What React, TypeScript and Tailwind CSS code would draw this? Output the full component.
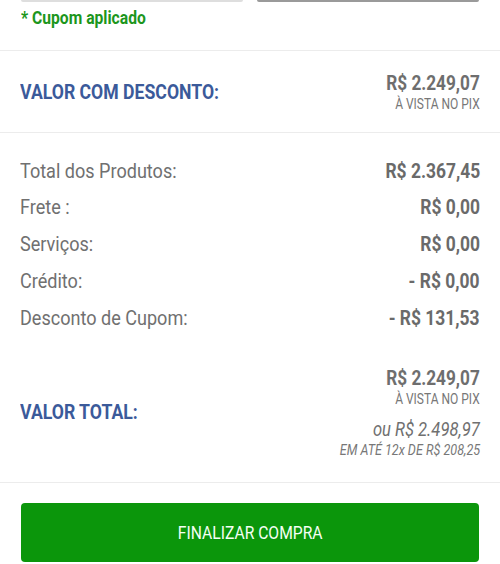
import React from "react";

const rows: [string, string][] = [
  ["Total dos Produtos:", "R$ 2.367,45"],
  ["Frete :", "R$ 0,00"],
  ["Serviços:", "R$ 0,00"],
  ["Crédito:", "- R$ 0,00"],
  ["Desconto de Cupom:", "- R$ 131,53"],
];

function Price() {
  return (
    <>
      <span className="inline-block origin-right scale-x-[0.86] whitespace-nowrap text-[20px] font-bold text-[#6e6e6e] leading-[24px]">
        R$ 2.249,07
      </span>
      <span className="inline-block origin-right scale-x-[0.8] whitespace-nowrap text-[15px] text-[#777] leading-[18px]">
        À VISTA NO PIX
      </span>
    </>
  );
}

export default function App() {
  return (
    <div
      className="w-[500px] h-[564px] bg-white overflow-hidden"
      style={{ fontFamily: "Roboto, 'Noto Sans', sans-serif" }}
    >
      <div className="flex px-[21px] gap-[14px]">
        <div className="flex-1 h-[2px] bg-[#dedede] rounded-b" />
        <div className="flex-1 h-[2px] bg-[#9a9a9a] rounded-b" />
      </div>
      <div className="h-[48px] px-[21px] pt-[4px]">
        <span className="inline-block origin-left scale-x-[0.87] whitespace-nowrap text-[18px] font-bold text-[#1c961c] leading-[24px]">
          * Cupom aplicado
        </span>
      </div>
      <div className="h-px bg-[#ececec]" />
      <div className="h-[81px] px-[20px] flex items-center justify-between">
        <span className="inline-block origin-left scale-x-[0.84] whitespace-nowrap text-[21px] font-bold text-[#3b5a9a] leading-none pt-[1px]">
          VALOR COM DESCONTO:
        </span>
        <div className="flex flex-col items-end">
          <Price />
        </div>
      </div>
      <div className="h-px bg-[#ececec]" />
      <div className="pt-[20px] px-[20px]">
        {rows.map(([l, v]) => (
          <div key={l} className="h-[36.75px] flex items-center justify-between">
            <span className="inline-block origin-left scale-x-[0.86] whitespace-nowrap text-[21px] text-[#707070]">
              {l}
            </span>
            <span className="inline-block origin-right scale-x-[0.83] whitespace-nowrap text-[21px] font-bold text-[#6a6a6a]">
              {v}
            </span>
          </div>
        ))}
      </div>
      <div className="h-[145px] px-[20px] flex items-center justify-between pt-[7px]">
        <span className="inline-block origin-left scale-x-[0.84] whitespace-nowrap text-[21px] font-bold text-[#3b5a9a] leading-none">
          VALOR TOTAL:
        </span>
        <div className="flex flex-col items-end">
          <Price />
          <span className="mt-[10px] inline-block origin-right scale-x-[0.83] whitespace-nowrap text-[20px] italic text-[#707070] leading-[22px]">
            ou R$ 2.498,97
          </span>
          <span className="inline-block origin-right scale-x-[0.84] whitespace-nowrap text-[15px] italic text-[#777] leading-[20px]">
            EM ATÉ 12x DE R$ 208,25
          </span>
        </div>
      </div>
      <div className="h-px bg-[#ececec]" />
      <div className="px-[21px] pt-[20px]">
        <button className="w-full h-[59px] rounded-[4px] bg-[#0b960b] text-[#f4fff4] flex items-center justify-center">
          <span className="inline-block scale-x-[0.87] whitespace-nowrap text-[18px]">
            FINALIZAR COMPRA
          </span>
        </button>
      </div>
    </div>
  );
}
